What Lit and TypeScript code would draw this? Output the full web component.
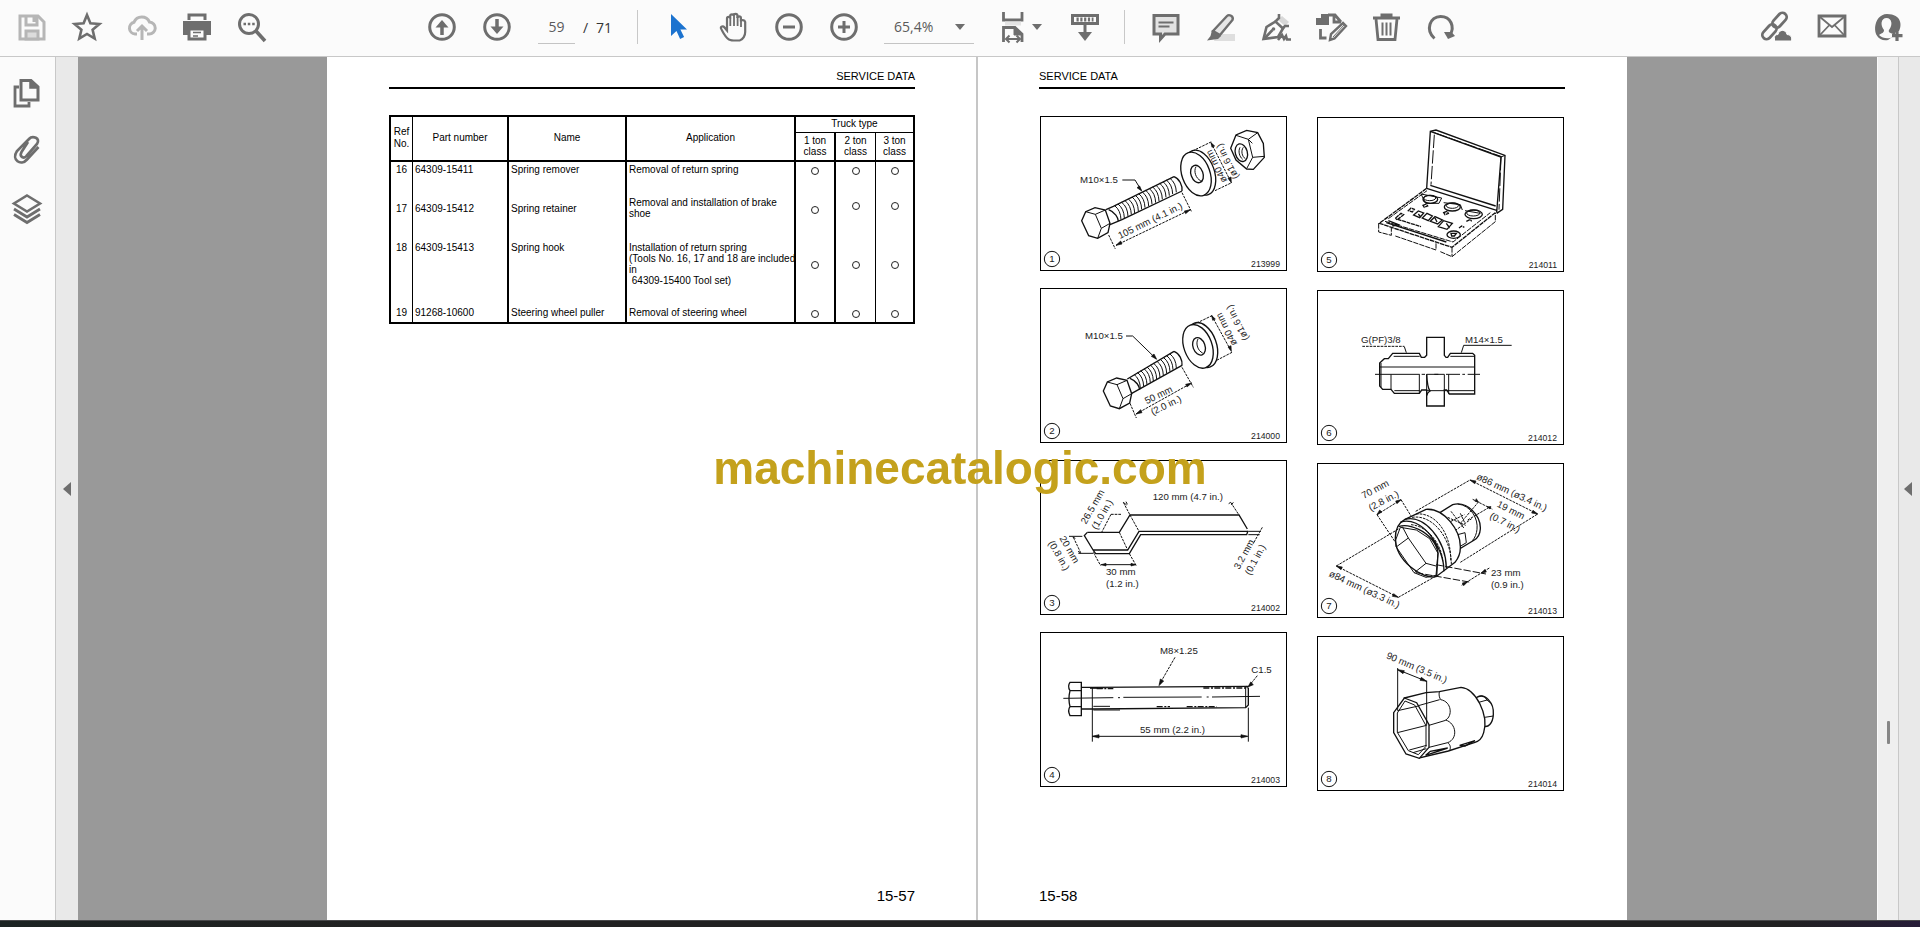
import { LitElement, html, svg, css } from "lit";
import { customElement, property } from "lit/decorators.js";

type Shape = ReturnType<typeof svg>;

const ICONS: Record<string, Shape> = {
  save: svg`<path d="M3 4h18l6 6v17H3z"/><path d="M9 4v9h11V4M17 5v5" /><path d="M9 27v-8h12v8z" fill="#dcdcdc"/>`,
  star: svg`<path d="M15 3l3.4 8.3 9 .7-6.8 5.8 2.1 8.8L15 22l-7.7 4.6 2.1-8.8L2.600 12l9-.7z" stroke-width="2.600"/>`,
  cloud: svg`<path d="M10 22H8a6 6 0 0 1-1-11.800A8.500 8.500 0 0 1 22.500 10 6 6 0 0 1 22 22h-2"/><path d="M15 28V15M10 19l5-5 5 5"/>`,
  print: svg`<path d="M7 8V3h16v5" /><path d="M1 9h28v14h-5v-6H6v6H1z" fill="currentColor" stroke="none"/><path d="M7 17h16v10H7z"/><path d="M11 20.500h8M11 24h5" stroke-width="1.600"/>`,
  search: svg`<circle cx="12" cy="12" r="9.500"/><path d="M19 19l9 10" stroke-width="3.600"/><path d="M6.500 12h2.500M10.800 12h2.500M15.200 12h2.500" stroke-width="2.600"/>`,
  up: svg`<circle cx="15" cy="15" r="12.300"/><path d="M15 23V10" stroke-width="3.500"/><path d="M8.500 15.500L15 8l6.500 7.500z" fill="currentColor" stroke="none"/>`,
  down: svg`<circle cx="15" cy="15" r="12.300"/><path d="M15 7v13" stroke-width="3.500"/><path d="M8.500 14.500L15 22l6.500-7.500z" fill="currentColor" stroke="none"/>`,
  pointer: svg`<path d="M7 2v22l5.500-5 3.600 8 4-1.900-3.700-7.600H23z" fill="#1c73cf" stroke="none"/>`,
  hand: svg`<path d="M10 27.500C6 25 4 20 2 16.500c-.6-2 2-2.800 3.300-1.200L8 18.500V6.500c0-2.200 3.200-2.200 3.200 0V4c0-2.300 3.600-2.300 3.600 0v-.5c0-2.300 3.600-2.300 3.600 0V6c0-2.200 3.500-2.200 3.500 0v3.500c0-2 3.800-2 4.300.5V20c0 3.500-2 7.500-5.500 8.500h-6c-2 0-3.200-.5-4.700-1z" stroke-width="2.200"/><path d="M11.300 6v8M15 4v10M18.600 5v9M22 8v7" stroke-width="1.800"/>`,
  minus: svg`<circle cx="15" cy="15" r="12.300"/><path d="M9 15h12" stroke-width="3"/>`,
  plus: svg`<circle cx="15" cy="15" r="12.300"/><path d="M9 15h12M15 9v12" stroke-width="3"/>`,
  fit: svg`<path d="M5.500 0v8h18.500V0" stroke-width="2.800"/><path d="M7 9.500h16v4H7z" fill="#e4e4e4" stroke="none"/><path d="M5.500 30V15.500h11.500l7 6.500v8" stroke-width="2.800"/><path d="M16 15v8h8z" fill="currentColor" stroke-width="1"/><path d="M8 27h14M11.500 23.500L8 27l3.500 3.500M18.500 23.500L22 27l-3.500 3.500" stroke-width="2"/>`,
  scroll: svg`<path d="M2.500 3.500h25v8h-25z"/><path d="M6.500 7.500h17" stroke-dasharray="2.200 1.600" stroke-width="4"/><path d="M15 13v10" stroke-width="3"/><path d="M8 20h14l-7 9z" fill="currentColor" stroke="none"/>`,
  comment: svg`<path d="M3 3.500h24V22H14l-4.500 5v-5H3z" fill="#e2e2e2"/><path d="M7.500 10.500h15M7.500 14.500h11" stroke-width="2"/>`,
  highlight: svg`<path d="M10 22h19v7H8z" fill="#dedede" stroke="none"/><path d="M7 19L21 4c2-2 7 0 5.500 4L14 23z" fill="#e6e6e6" stroke-width="2.400"/><path d="M6 18l9 6-3 3-4 .6L1 28.500l3.500-4.500z" fill="currentColor" stroke="none"/>`,
  pen: svg`<path d="M17 8l4-4 7 6-4 4z" fill="#d8d8d8" stroke="none"/><path d="M2.500 27L5.500 15l9-5.500 7.500 7-5 8.500z" stroke-width="2.600"/><path d="M14 10l4-4V2M21 17l3-3h4M3 27l8.500-9" stroke-width="2.600"/><circle cx="12.500" cy="17" r="1.800" fill="currentColor" stroke="none"/><path d="M17 28l4-5 2 4 2-3 1 3.500h4" stroke-width="2.600"/>`,
  organize: svg`<path d="M0 6h5V2h8v11H0z" fill="currentColor" stroke="none"/><path d="M12 3h7l6 7M18 4v6h7M4.500 17v9h6" stroke-width="2.800"/><path d="M14 28l1-6L27 11l3 3L18.500 26.500z" stroke-width="2.400"/><path d="M17 25L28 13" stroke-width="1"/>`,
  trash: svg`<path d="M2 6h27M11 5V3h9v2" stroke-width="3"/><path d="M5 7l2 20.500h17L26 7" stroke-width="2.800"/><path d="M11.500 10.500v13M15.500 10.500v13M19.500 10.500v13" stroke-width="2"/>`,
  rotate: svg`<path d="M8.500 26.500C-1 18 4 4.500 14.500 4.500S29 15 24 23" stroke-width="3"/><path d="M18 20l4 7 7-3-3.500-4z" fill="currentColor" stroke="none"/>`,
  link: svg`<rect x="10" y="4" width="17" height="8.500" rx="4.200" transform="rotate(-48 18.500 8.200)" stroke-width="2.800"/><rect x="0" y="15.500" width="17" height="8.500" rx="4.200" transform="rotate(-48 8.500 19.800)" stroke-width="2.800"/><path d="M13.500 29v-3.500c0-2 1.500-3 3.500-3 1-5.500 8-5.500 9 0 5 .5 5 4 4.500 6.500z" fill="currentColor" stroke="#fbfbfb" stroke-width="1"/>`,
  mail: svg`<path d="M2 4h26v20H2z" stroke-width="2.800"/><path d="M3 5l12 10L27 5M3 23l9-9.500M27 23l-9-9.500" stroke-width="1.800"/>`,
  person: svg`<path d="M15 28C-3 31-1 2 14 2s15 12 12 17c-3 0-4 1-4 4" fill="currentColor" stroke="none"/><path d="M6 23c3-2 5-2 5-5-4-5-3-12 2.500-12s6.500 7 2.500 12c-1 2 1 3 4 4v3c-4 2-10 2-14-2z" fill="#fbfbfb" stroke="none"/><path d="M24 18.500v10.500M19 23.700h10.500" stroke-width="3.200"/>`,
  pages: svg`<path d="M9 2.500h10l7 6.500v13H9z"/><path d="M18 2v8h8" fill="currentColor" stroke-width="1.500"/><path d="M7 9H3v19h14v-4" stroke-width="2.800"/>`,
  clip: svg`<path d="M16 6l-6.500 10c-2.500 5 2.500 7 5 4L25 8c4-6-4.500-9-8-5L5 15c-6 9 4 15.500 10 8.500L26.500 11" stroke-width="2.700"/>`,
  layers: svg`<path d="M15 1.500l13 8-13 8-13-8z" stroke-width="2.600"/><path d="M2 15l13 8 13-8M2 20.500l13 8 13-8" stroke-width="2.800"/>`,
};

const threads = (x: number, y: number, len: number, rise: number, n: number): Shape => {
  const lines: Shape[] = [];
  for (let i = 0; i < n; i++) {
    const px = Math.round(x + (len * i) / n);
    const py = Math.round(y - (rise * i) / n);
    lines.push(svg`<path d="M${px} ${py}q18 14 19 42"/>`);
  }
  return svg`${lines}`;
};

const boltHead = svg`
  <path class="heavy solid" d="M155 482l12-27 28-12 31 7 14 40-6 28-31 17-27-8z"/>
  <path d="M167 455l29 8 18 42-11 30M196 463l30-13M214 505l26-15"/>`;

const washer = svg`
  <ellipse class="heavy solid" cx="511" cy="338" rx="42" ry="70" transform="rotate(-20 511 338)"/>
  <ellipse class="heavy solid" cx="498" cy="342" rx="42" ry="68" transform="rotate(-20 498 342)"/>
  <ellipse class="heavy" cx="501" cy="342" rx="18" ry="27" transform="rotate(-20 501 342)"/>
  <path d="M498 320c-8 14 0 36 14 42"/>`;

interface Figure {
  no: number;
  code: string;
  x: number;
  y: number;
  art: Shape;
}

const FIGURES: Figure[] = [
  {
    no: 1, code: "213999", x: 30, y: 168,
    art: svg`
      <path class="heavy" d="M228 449l22-10M240 494l36-15M250 439l182-89M276 479l180-86"/>
      <path class="heavy" d="M432 350c16 6 26 26 24 43M236 449c20 8 28 24 29 34"/>
      ${threads(254, 437, 176, 87, 17)}
      ${boltHead}${washer}
      <path class="heavy solid" d="M602 265l16-40 32-14 33 7 17 32 3 42-33 36-20-1-32-27z"/>
      <path d="M618 226l37 12 13 54-18 34M655 238l28-20M668 292l35-3M655 238l12 12"/>
      <ellipse class="heavy" cx="634" cy="278" rx="18" ry="27" transform="rotate(-15 634 278)"/>
      <path d="M630 262c-6 12-2 28 8 36M640 262c-8 10-4 28 6 34"/>
      <path class="dash" d="M487 273l58-28M555 392l50-24M543 248l61 120M236 525l20 42M456 398l28 56M258 556l223-107"/>
      <path class="tip" d="M258 556l14-13 4 9zM481 449l-18 4 4 8zM543 248l3 14 8-4zM604 368l-10-13 9-4zM335 393l-14-10 8-5z"/>
      <path d="M277 360h38l19 31"/>
      <text x="150" y="369">M10×1.5</text>
      <text transform="translate(270 537) rotate(-26)">105 mm (4.1 in.)</text>
      <text transform="translate(592 362) rotate(-117)">ø40 mm</text>
      <text transform="translate(627 352) rotate(-117)">(ø1.6 in.)</text>`,
  },
  {
    no: 2, code: "214000", x: 30, y: 684,
    art: svg`
      <path class="heavy" d="M292 957l140-83M304 1001l152-85"/>
      <path class="heavy" d="M432 874c16 6 26 26 24 43M300 955c20 8 28 24 29 34"/>
      ${threads(312, 943, 118, 67, 12)}
      <g transform="translate(65 511)">${boltHead}</g>
      <g transform="translate(6 517)">${washer}</g>
      <path class="dash" d="M490 794l58-28M560 901l48-25M545 767l59 107M300 1030l19 44M456 922l34 60M318 1062l167-93"/>
      <path class="tip" d="M318 1062l14-13 4 9zM485 969l-18 4 4 8zM545 767l3 14 8-4zM604 874l-10-13 9-4zM380 898l-16-9 8-7z"/>
      <path d="M288 828h20l70 68"/>
      <text x="165" y="837">M10×1.5</text>
      <text transform="translate(350 1033) rotate(-26)">50 mm</text>
      <text transform="translate(368 1066) rotate(-26)">(2.0 in.)</text>
      <text transform="translate(622 851) rotate(-117)">ø40 mm</text>
      <text transform="translate(657 836) rotate(-117)">(ø1.6 in.)</text>`,
  },
  {
    no: 3, code: "214002", x: 30, y: 33,
    art: svg`
      <path class="heavy" d="M172 250h96l32-52h327l25 42"/>
      <path class="heavy" d="M172 250l-9 10 28 46 6 8h101l34-57h318l4-12M190 303h103l34-56h325"/>
      <path class="dash" d="M268 250l25 53M300 198l27 49M243 196l-28 54M243 196h32M280 160l20 38M602 160l25 38M190 310l22 40M298 314l22 38M130 265l22 46M697 235l-28 50"/>
      <path d="M117 262h40M145 313h44M212 347h106M655 247h38M655 257h34"/>
      <path class="tip" d="M214 347l14-4v8zM317 347l-14-4v8z"/>
      <path d="M280 160l10 8M288 158l4 8M602 160l-6 4M610 160l-6 8M128 264l8 4M152 312l-8-5"/>
      <text x="368" y="153">120 mm (4.7 in.)</text>
      <text transform="translate(168 227) rotate(-60)">26.5 mm</text>
      <text transform="translate(200 244) rotate(-60)">(1.0 in.)</text>
      <text transform="translate(88 268) rotate(60)">20 mm</text>
      <text transform="translate(54 282) rotate(60)">(0.8 in.)</text>
      <text transform="translate(628 363) rotate(-62)">3.2 mm</text>
      <text transform="translate(661 380) rotate(-62)">(0.1 in.)</text>
      <text x="228" y="378">30 mm</text>
      <text x="228" y="414">(1.2 in.)</text>`,
  },
  {
    no: 4, code: "214003", x: 30, y: 549,
    art: svg`
      <path class="heavy" d="M120 700h34v100h-34c-5-10-5-20 0-27-4-16-4-32 0-48-5-8-5-18 0-25zM120 725h34M120 773h34"/>
      <path class="heavy" d="M155 715h32l468-3M155 780h32l460-4 8-8v-50l-8-6"/>
      <path d="M187 715v163M655 776v102M647 712v64M187 862h466M180 718h40M190 772h50M190 783h80"/>
      <path class="heavy" d="M200 719h50M520 717h130M380 773h40M470 773h90" stroke-dasharray="18 5 6 4"/>
      <path d="M100 748l150-2M264 746h6M280 745l235-1M530 744h6M546 744l144-2"/>
      <path class="dash" d="M435 625l-46 80M682 680l-26 32"/>
      <path class="tip" d="M187 862l20-5v10zM653 862l-20-5v10zM387 710l4-20 10 6zM654 714l8-15 8 8z"/>
      <text x="390" y="614">M8×1.25</text>
      <text x="664" y="672">C1.5</text>
      <text x="330" y="852">55 mm (2.2 in.)</text>`,
  },
  {
    no: 5, code: "214011", x: 48, y: 171,
    art: svg`
      <path class="heavy" d="M377 385l11-171 17-4 207 76-7 162-18 12M388 214l212 77-13 167M377 385l210 66M388 376l196 62"/>
      <path d="M400 224l-10 150M400 218l202 72M612 286l-12 5M600 291l-6 158" stroke-dasharray="40 7"/>
      <path class="heavy" d="M377 385L235 490l218 72 130-104" stroke-dasharray="14 2"/>
      <path d="M233 490v26l38 10v-22M283 528l122 42v-24M418 575l35 15 130-105v-27M453 562v28M252 484l204 62 112-88M262 476l116-84" stroke-dasharray="16 3"/>
      <path class="heavy" d="M256 488l180 58M262 482l30 12-18 4"/>
      <ellipse class="heavy" cx="388" cy="418" rx="22" ry="12"/><ellipse cx="386" cy="414" rx="18" ry="8"/>
      <ellipse class="heavy" cx="454" cy="441" rx="24" ry="12"/><ellipse cx="454" cy="437" rx="18" ry="8"/>
      <ellipse class="heavy" cx="518" cy="463" rx="26" ry="13"/><ellipse cx="517" cy="459" rx="20" ry="9"/>
      <path d="M360 402l62 12-8 16h-40zM428 428l50 6 6 16M492 452l46 8"/>
      <ellipse class="heavy" cx="458" cy="524" rx="20" ry="11"/><path class="heavy" d="M450 520h16l-6 8h-8z"/>
      <path class="heavy" d="M338 465l14-12 16 6-12 14zM364 474l14-14 16 8-12 14zM388 484l14-14 22 10-14 12zM412 500l16-18 26 8-16 18zM436 490l10 14M352 462l8 10M402 474l6 12"/>
      <path class="heavy" d="M322 452l8-8 10 4-6 8zM366 436l10-4 4 6-10 4zM428 458l10-4 4 6-10 4zM284 474l16-14 8 4-20 16zM290 478l70 22M474 504l8-6 8 4M496 484l12-6 4 6" stroke-dasharray="12 2"/>`,
  },
  {
    no: 6, code: "214012", x: 48, y: 690,
    art: svg`
      <path class="heavy" d="M236 978v-69l14-13h12l13-16h80l6 12h10l6-6v-54h53v54l5 6h5l8-12h67l6 6v116h-76l-8-12h-7v48h-53v-48h-15l-7 10h-75l-10-12h-25z"/>
      <path d="M236 921h285M270 943v45M355 943v57M443 943v59M236 943h120M377 943v49M430 943v49M377 992h144M377 943h53M278 889h78M448 889h72M280 992h76M240 909v72"/>
      <path class="heavy" d="M377 943q2 40 10 50q-8 4-10 14"/>
      <path d="M222 943h15M362 943h10M400 943h12M435 943h42M484 943h8M500 943h37"/>
      <path d="M632 856H488l-7 22M310 860l6 18"/>
      <path class="dash" d="M184 859h126"/>
      <text x="180" y="849">G(PF)3/8</text>
      <text x="492" y="849">M14×1.5</text>`,
  },
  {
    no: 7, code: "214013", x: 48, y: 37,
    art: svg`
      <path class="heavy solid" d="M413 188l42-26c45-12 85 34 83 73-1 15-8 27-18 33l-60 36z"/>
      <path d="M470 160c40 4 62 44 58 76-1 12-6 26-14 34M470 252l22-6 4 30-20 12z"/>
      <path class="dash" d="M440 200l54 24M430 222l60-30M450 182l40 52M462 240l50-36M478 188l14 30"/>
      <path class="heavy solid" d="M283 262c0-27 12-47 29-56l63-30c55-4 105 64 103 116 0 18-8 33-16 43l-57 43c-40 10-122-48-122-116z"/>
      <path class="heavy" d="M299 214c60-20 130 70 130 148M312 206c58-14 122 60 124 146M293 228c10-4 30-6 60 8 34 16 54 44 58 70l-4 70"/>
      <path d="M284 268l14-38 48 8 40 26 25 44-6 66-30 6-36-14-54-78z"/>
      <path d="M287 288l35-26 53 76-35 28M322 262l-18-34M375 338l30 8"/>
      <path class="dash" d="M333 200c60-10 118 60 118 140M345 190c60-6 106 60 104 140M330 222c50 4 90 56 96 110"/>
      <path class="dash" d="M106 346l188-112M344 182l163-94M292 440l110-62M478 335l232-145M507 88l203 102M106 346l186 94M228 192l56 84M300 147l32 52M228 192l72-45M478 218l56-66M500 208l68-40M515 146l60 30M565 352l-85 53"/>
      <path d="M405 342l150 28M345 366l165 29" stroke-dasharray="22 6"/>
      <path class="tip" d="M106 346l18 3-4 8zM292 440l-18-3 4-8zM507 88l18 3-4 8zM710 190l-18-3 4-8zM228 192l8-14 7 6zM300 147l-16 4 4 8zM532 154l-10-2 4-8zM558 168l12 0-3 7zM540 368l12-12 4 8zM500 393l-12 12-4-8z"/>
      <text transform="translate(188 145) rotate(-28)">70 mm</text>
      <text transform="translate(209 182) rotate(-28)">(2.8 in.)</text>
      <text transform="translate(524 85) rotate(25)">ø86 mm (ø3.4 in.)</text>
      <text transform="translate(586 167) rotate(27)">19 mm</text>
      <text transform="translate(564 202) rotate(27)">(0.7 in.)</text>
      <text transform="translate(82 376) rotate(25)">ø84 mm (ø3.3 in.)</text>
      <text x="570" y="375">23 mm</text>
      <text x="570" y="411">(0.9 in.)</text>`,
  },
  {
    no: 8, code: "214014", x: 48, y: 556,
    art: svg`
      <path class="heavy solid" d="M524 742c28-20 56 16 53 50-2 28-16 40-30 34z"/>
      <path d="M530 756l28-8c-10-14-18-14-26-10M551 800l26-4M558 748l12 10"/>
      <path class="heavy solid" d="M310 742l65-16 40-3 65-13c44 4 84 82 68 136-4 14-14 26-26 29l-80 26-87 21z"/>
      <path class="heavy solid" d="M310 742l37 14 37 66v68l-29 33-40-13-37-64v-60z"/>
      <path d="M312 751l29 12 34 62v62l-23 25-30-12-33-55v-58zM290 780l62-14M289 846l88-22M352 765l64-18M384 824l50-15M384 890l56-14M325 898l52-14M336 906l40-12"/>
      <path d="M415 723c-2 10 0 18 4 24 34 6 36 50 15 61 32 10 38 56 6 68 8 6 10 14 6 24"/>
      <path class="heavy" d="M374 914l66-22-52 10zM476 884l46-14-30 16z"/>
      <path d="M290 652v128M377 690v134M290 657l87 35"/>
      <path class="tip" d="M290 657l20 3-4 9zM377 692l-20-3 4-9z"/>
      <text transform="translate(254 622) rotate(23)">90 mm (3.5 in.)</text>`,
  },
];

interface Tool {
  ref: string;
  part: string;
  name: string;
  use: string[];
  row: string;
}

const TOOLS: Tool[] = [
  { ref: "16", part: "64309-15411", name: "Spring remover", use: ["Removal of return spring"], row: "first" },
  { ref: "17", part: "64309-15412", name: "Spring retainer", use: ["Removal and installation of brake", "shoe"], row: "second" },
  {
    ref: "18", part: "64309-15413", name: "Spring hook",
    use: ["Installation of return spring", "(Tools No. 16, 17 and 18 are included", "in", "\u00a064309-15400 Tool set)"],
    row: "third",
  },
  { ref: "19", part: "91268-10600", name: "Steering wheel puller", use: ["Removal of steering wheel"], row: "last" },
];

@customElement("tool-icon")
export class ToolIcon extends LitElement {
  @property() name = "";

  static styles = css`
    :host { display: block; flex: none; width: 30px; height: 30px; }
    svg { display: block; overflow: visible; fill: none; stroke: currentColor; stroke-width: 3; }
  `;

  render() {
    return html`<svg width="30" height="30" viewBox="0 0 30 30" aria-hidden="true">${ICONS[this.name]}</svg>`;
  }
}

@customElement("figure-panel")
export class FigurePanel extends LitElement {
  @property({ attribute: false }) figure!: Figure;

  static styles = css`
    :host { display: block; }
    figure { margin: 0; border: 1px solid #000; background: #fff; }
    svg { display: block; width: 100%; height: auto; fill: none; stroke: #111; stroke-width: 3; }
    .heavy { stroke-width: 4; }
    .solid { fill: #fff; }
    .dash { stroke-dasharray: 8 3; }
    .tip { fill: #111; stroke-width: 2; }
    text { font: 29px "Liberation Sans", Arial, sans-serif; fill: #222; stroke: none; }
    .code { font-size: 26px; text-anchor: end; }
    .no { text-anchor: middle; }
    .ring { stroke-width: 3; }
  `;

  render() {
    const f = this.figure;
    return html`<figure>
      <svg viewBox="${f.x + 3} ${f.y + 3} 735 459" role="img" aria-label="Figure ${f.no}">
        ${f.art}
        <circle class="ring" cx=${f.x + 36} cy=${f.y + 429} r="23"></circle>
        <text class="no" x=${f.x + 36} y=${f.y + 439}>${f.no}</text>
        <text class="code" x=${f.x + 720} y=${f.y + 453}>${f.code}</text>
      </svg>
    </figure>`;
  }
}

@customElement("app-root")
export class AppRoot extends LitElement {
  static styles = css`
    :host {
      display: flex;
      flex-direction: column;
      height: 100vh;
      overflow: hidden;
      color: #000;
      background: #999;
      font-family: "Liberation Sans", Arial, sans-serif;
    }
    * { box-sizing: border-box; }
    button { border: 0; padding: 0; background: none; color: #6e6e6e; display: flex; align-items: center; justify-content: center; }

    .toolbar {
      display: flex;
      align-items: center;
      flex: none;
      height: 57px;
      padding: 0 4px 2px;
      background: #fbfbfb;
      border-bottom: 1px solid #c8c8c8;
      font: 14px "Open Sans", "Noto Sans", sans-serif;
    }
    .group { display: flex; align-items: center; flex: none; }
    .toolbar button { width: 55px; height: 44px; }
    .group.end button { width: 56px; }
    .toolbar button.faint { color: #b6b6b6; }
    .toolbar button.fit { width: 60px; margin: 0 9px 0 14px; padding-left: 3px; gap: 4px; }
    .lead { flex: 17; }
    .rest { flex: 35; }
    .divider { width: 1px; height: 34px; margin: 0 13px 0 12px; background: #c8c8c8; }
    .pager { display: flex; align-items: center; gap: 8px; margin: 0 13px; color: #333; }
    .field {
      height: 34px;
      border: 0;
      border-bottom: 1px solid #c4c4c4;
      border-radius: 0;
      background: none;
      color: #5a5a5a;
      font: inherit;
      outline: none;
    }
    .pager .field { width: 37px; padding: 0; text-align: center; }
    .zoom { position: relative; margin-left: 13px; }
    .zoom .field { display: block; width: 90px; padding: 0 10px; appearance: none; }
    .zoom .caret { position: absolute; right: 9px; top: 14px; }
    .caret { width: 0; border: 5px solid transparent; border-top: 6px solid #6e6e6e; border-bottom: 0; }

    .work { display: flex; flex: 1; min-height: 0; }
    .side { flex: none; width: 56px; padding-top: 7px; background: #fbfbfb; border-right: 1px solid #c8c8c8; }
    .side button { width: 55px; height: 58px; padding-right: 1px; }
    .pane { flex: none; width: 22px; display: flex; background: #e9e9e9; }
    .pane button { flex: 1; }
    .pane.right { border-left: 1px solid #c8c8c8; }
    .pane.right button { padding-right: 3px; }
    .arrow { border: 7px solid transparent; border-right: 8px solid #6e6e6e; border-left: 0; }
    .scrollbar { flex: none; width: 21px; display: flex; flex-direction: column; align-items: center; background: #efefef; border-left: 1px solid #fafafa; }
    .above { flex: 664; }
    .below { flex: 176; }
    .thumb { width: 3px; height: 23px; background: #868686; border-radius: 1px; }

    .canvas { flex: 1; min-width: 0; display: flex; justify-content: center; padding-right: 1px; background: #999; }
    .page { flex: 0 1 649px; min-width: 0; display: flex; flex-direction: column; padding: 12px 62px 15px 61px; background: #fff; }
    .page.odd { padding: 12px 61px 15px 62px; }
    .gutter { flex: none; width: 2px; background: #c6c6c6; }
    .heading { margin: 0; padding-bottom: 4px; border-bottom: 2px solid #000; font-size: 11px; font-weight: 400; line-height: 14px; }
    .folio { margin: auto 0 0; font-size: 15px; line-height: 18px; }
    .odd .heading, .odd .folio { text-align: right; }

    table {
      width: 100%;
      margin-top: 26px;
      table-layout: fixed;
      border: 2px solid #000;
      border-spacing: 0;
      font-size: 10px;
      line-height: 11px;
      white-space: nowrap;
    }
    .c-ref { width: 22px; }
    .c-part { width: 96px; }
    .c-name { width: 118px; }
    .c-use { width: 169px; }
    .c-ton { width: 40px; }
    th { padding: 0 0 2px; font-weight: 400; border-bottom: 2px solid #000; border-right: 2px solid #000; }
    td { padding: 2px 0 0 2px; border-right: 2px solid #000; vertical-align: top; }
    th.ref, td.ref, th.thin, td.thin { border-right-width: 1px; }
    th.ref { line-height: 12px; }
    td.ref, td.mark { padding-left: 0; text-align: center; }
    th:last-child, td:last-child { border-right: 0; }
    tr th.truck { height: 16px; border-right: 0; border-bottom-width: 1px; }
    tr.tons th { height: 29px; }
    tr.tons th:last-child { border-right: 0; }
    .first td { height: 33px; }
    .second td { height: 45px; padding-bottom: 21px; vertical-align: middle; }
    .second td.mark + td.mark { padding-top: 4px; vertical-align: top; }
    .third td { height: 65px; }
    .third td.mark { padding-bottom: 21px; vertical-align: middle; }
    .last td { height: 17px; }
    .ring { display: inline-block; width: 8px; height: 8px; border: 1px solid #222; border-radius: 50%; vertical-align: -2px; }

    .plates { display: grid; grid-template-columns: 1fr 1fr; gap: 30px; margin-top: 27px; padding: 0 1px; }
    .stack { display: flex; flex-direction: column; gap: 17px; }
    .stack.second-stack { gap: 18px; padding-top: 1px; }

    .watermark {
      position: fixed;
      inset: 0;
      display: flex;
      align-items: center;
      justify-content: center;
      padding-top: 9px;
      color: #c4a11c;
      font-size: 46px;
      font-weight: 700;
      pointer-events: none;
    }
    .taskbar {
      flex: none;
      height: 7px;
      border-top: 1px solid #48484a;
      background: linear-gradient(90deg, #1c2322, #212121 20%, #212121 93%, #261c38);
    }
  `;

  private tool(icon: string, label: string, cls = "") {
    return html`<button type="button" class=${cls} aria-label=${label}><tool-icon name=${icon}></tool-icon></button>`;
  }

  render() {
    return html`
      <header class="toolbar">
        <div class="group">
          ${this.tool("save", "Save", "faint")} ${this.tool("star", "Star")} ${this.tool("cloud", "Upload", "faint")}
          ${this.tool("print", "Print")} ${this.tool("search", "Find")}
        </div>
        <div class="lead"></div>
        <div class="group">
          ${this.tool("up", "Previous page")} ${this.tool("down", "Next page")}
          <div class="pager">
            <input class="field" aria-label="Page number" value="59" />
            <span>/</span><span>71</span>
          </div>
          <div class="divider"></div>
          ${this.tool("pointer", "Select")} ${this.tool("hand", "Pan")} ${this.tool("minus", "Zoom out")} ${this.tool("plus", "Zoom in")}
          <div class="zoom">
            <select class="field" aria-label="Zoom level"><option>65,4%</option></select>
            <span class="caret"></span>
          </div>
          <button type="button" class="fit" aria-label="Page fit"><tool-icon name="fit"></tool-icon><span class="caret"></span></button>
          ${this.tool("scroll", "Scrolling mode")}
          <div class="divider"></div>
          ${this.tool("comment", "Comment")} ${this.tool("highlight", "Highlight")} ${this.tool("pen", "Sign")}
          ${this.tool("organize", "Edit pages")} ${this.tool("trash", "Delete")} ${this.tool("rotate", "Rotate")}
        </div>
        <div class="rest"></div>
        <div class="group end">
          ${this.tool("link", "Share link")} ${this.tool("mail", "Send by mail")} ${this.tool("person", "Add people")}
        </div>
      </header>

      <div class="work">
        <nav class="side">
          ${this.tool("pages", "Page thumbnails")} ${this.tool("clip", "Attachments")} ${this.tool("layers", "Layers")}
        </nav>
        <div class="pane"><button type="button" aria-label="Collapse navigation"><span class="arrow"></span></button></div>

        <main class="canvas">
          <section class="page odd">
            <h2 class="heading">SERVICE DATA</h2>
            <table>
              <colgroup>
                <col class="c-ref" /><col class="c-part" /><col class="c-name" /><col class="c-use" />
                <col class="c-ton" /><col class="c-ton" /><col />
              </colgroup>
              <thead>
                <tr>
                  <th class="ref" rowspan="2">Ref<br />No.</th>
                  <th rowspan="2">Part number</th>
                  <th rowspan="2">Name</th>
                  <th rowspan="2">Application</th>
                  <th class="truck" colspan="3">Truck type</th>
                </tr>
                <tr class="tons">
                  <th>1 ton<br />class</th>
                  <th class="thin">2 ton<br />class</th>
                  <th>3 ton<br />class</th>
                </tr>
              </thead>
              <tbody>
                ${TOOLS.map(
                  (t) => html`<tr class=${t.row}>
                    <td class="ref">${t.ref}</td>
                    <td>${t.part}</td>
                    <td>${t.name}</td>
                    <td>${t.use.map((line, i) => html`${i ? html`<br />` : ""}${line}`)}</td>
                    <td class="mark"><span class="ring" role="img" aria-label="yes"></span></td>
                    <td class="mark thin"><span class="ring" role="img" aria-label="yes"></span></td>
                    <td class="mark"><span class="ring" role="img" aria-label="yes"></span></td>
                  </tr>`
                )}
              </tbody>
            </table>
            <p class="folio">15-57</p>
          </section>
          <div class="gutter"></div>
          <section class="page">
            <h2 class="heading">SERVICE DATA</h2>
            <div class="plates">
              <div class="stack">${FIGURES.slice(0, 4).map((f) => html`<figure-panel .figure=${f}></figure-panel>`)}</div>
              <div class="stack second-stack">${FIGURES.slice(4).map((f) => html`<figure-panel .figure=${f}></figure-panel>`)}</div>
            </div>
            <p class="folio">15-58</p>
          </section>
        </main>

        <div class="scrollbar"><div class="above"></div><div class="thumb"></div><div class="below"></div></div>
        <div class="pane right"><button type="button" aria-label="Expand tools"><span class="arrow"></span></button></div>
      </div>
      <footer class="taskbar"></footer>
      <div class="watermark">machinecatalogic.com</div>
    `;
  }
}
